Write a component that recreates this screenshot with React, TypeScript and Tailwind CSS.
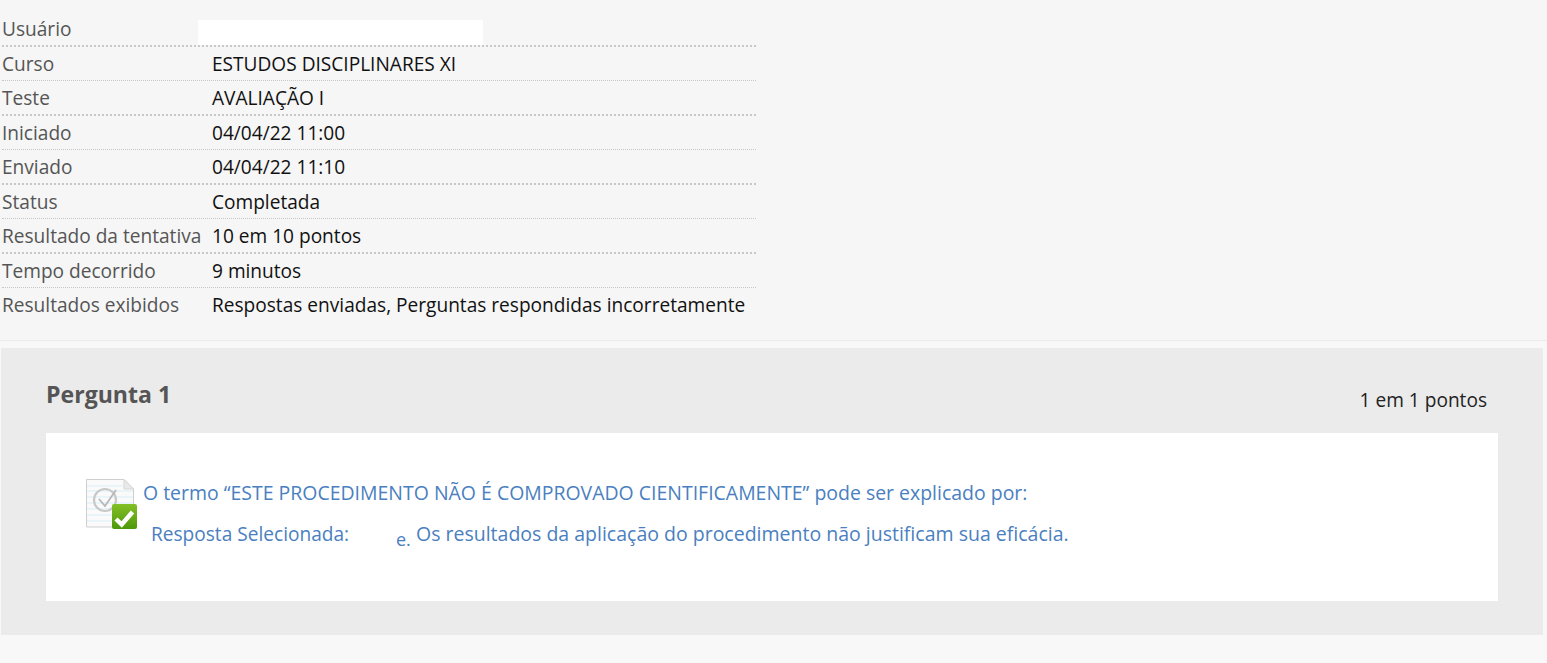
const rows = [
  ["Curso", "ESTUDOS DISCIPLINARES XI"],
  ["Teste", "AVALIAÇÃO I"],
  ["Iniciado", "04/04/22 11:00"],
  ["Enviado", "04/04/22 11:10"],
  ["Status", "Completada"],
  ["Resultado da tentativa", "10 em 10 pontos"],
  ["Tempo decorrido", "9 minutos"],
  ["Resultados exibidos", "Respostas enviadas, Perguntas respondidas incorretamente"],
];

function Icon() {
  return (
    <svg width="52" height="52" viewBox="0 0 52 52" className="shrink-0">
      <defs>
        <linearGradient id="g" x1="0" y1="0" x2="0" y2="1">
          <stop offset="0" stopColor="#84bf26" />
          <stop offset="1" stopColor="#4c990a" />
        </linearGradient>
      </defs>
      <path d="M0.5 0.5H38L47.5 10V48H0.5Z" fill="#fafafa" stroke="#cfcfcf" />
      <path d="M38 0.5V10H47.5Z" fill="#e9e9e9" stroke="#d6d6d6" />
      <path d="M1 7H37M1 12H47M1 18H47M1 24H47M1 30H47M1 36H47M1 42H47" stroke="#d8eff6" strokeWidth="1" />
      <circle cx="19" cy="21" r="11" fill="none" stroke="#c8c8c8" strokeWidth="2.2" />
      <path d="M13 20L19 27L30 11" fill="none" stroke="#b8b8b8" strokeWidth="1.8" />
      <rect x="26" y="25" width="25" height="25" rx="2" fill="url(#g)" />
      <path d="M30 40L35.7 45.5L46.5 33" fill="none" stroke="#ffffff" strokeWidth="4.5" />
    </svg>
  );
}

export default function App() {
  return (
    <div className="min-h-[663px] bg-[#f8f8f8] font-['Open_Sans',sans-serif] text-[19.1px] overflow-hidden">
      <div className="bg-[#f6f6f6] h-[341px] pt-[11px] pl-[2px] border-b border-[#ececec]">
        <div className="w-[754px]">
          <div className="flex h-[36px] border-b-2 border-dotted border-[#c8c8c8]">
            <div className="w-[196px] text-[#555] leading-[36px]">Usuário</div>
            <div className="w-[285px] h-[25px] mt-[9px] bg-white" />
          </div>
          {rows.map(([k, v], i) => (
            <div
              key={k}
              className={
                "flex leading-[34px] border-dotted border-[#c8c8c8] " +
                (i === rows.length - 1 ? "h-[34px]" : i % 2 === 0 ? "h-[34px] border-b" : "h-[35px] border-b-2")
              }
            >
              <div className="w-[210px] shrink-0 text-[#555] whitespace-nowrap">{k}</div>
              <div className="text-[#111] whitespace-nowrap">{v}</div>
            </div>
          ))}
        </div>
      </div>
      <div className="mt-[7px] ml-[1px] w-[1542px] h-[287px] bg-[#ebebeb] px-[45px]">
        <div className="h-[85px] flex justify-between">
          <h1 className="text-[23.1px] font-bold text-[#555] mt-[28px] leading-[36px]">Pergunta 1</h1>
          <div className="text-[#222] mt-[38px] mr-[11px] leading-[28px]">1 em 1 pontos</div>
        </div>
        <div className="bg-white h-[168px] pl-[40px] pt-[46px] text-[#4a80c0]">
          <div className="flex items-start">
            <Icon />
            <div className="-ml-[47px] pl-[52px] min-w-0">
              <div className="leading-[28px] whitespace-nowrap text-[19.47px]">O termo “ESTE PROCEDIMENTO NÃO É COMPROVADO CIENTIFICAMENTE” pode ser explicado por:</div>
            </div>
          </div>
          <div className="flex -mt-[11px] ml-[65px] whitespace-nowrap">
            <div className="w-[245px] leading-[28px]">Resposta Selecionada:</div>
            <div className="w-[20px] leading-[28px] mt-[5px] text-[18px]">e.</div>
            <div className="leading-[28px] text-[19.5px]">Os resultados da aplicação do procedimento não justificam sua eficácia.</div>
          </div>
        </div>
      </div>
    </div>
  );
}
